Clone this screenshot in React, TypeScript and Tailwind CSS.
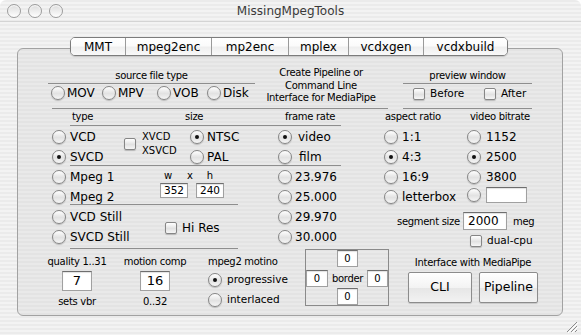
import React from 'react'

/* ─── Aqua controls ─────────────────────────────────────────────────────── */

function Radio({ on }: { on?: boolean }) {
  return (
    <span className="flex h-[14px] w-[14px] shrink-0 items-center justify-center rounded-full border border-[#868686] bg-[linear-gradient(to_bottom,#ffffff,#e2e2e2_55%,#f6f6f6)] shadow-[0_1px_1px_rgba(0,0,0,0.2)]">
      {on && <span className="h-[4px] w-[4px] rounded-full bg-[#111]" />}
    </span>
  )
}

function Check() {
  return (
    <span className="block h-[12px] w-[12px] shrink-0 rounded-[2px] border border-[#868686] bg-[linear-gradient(to_bottom,#ffffff,#e2e2e2_55%,#f6f6f6)] shadow-[0_1px_1px_rgba(0,0,0,0.2)]" />
  )
}

interface RadioRowProps {
  label: string
  on?: boolean
  gap?: string
  size?: string
}

function RadioRow({ label, on, gap = 'gap-[4px]', size = 'text-[12px]' }: RadioRowProps) {
  return (
    <div className={`flex h-[20px] items-center whitespace-nowrap ${gap}`}>
      <Radio on={on} />
      <span className={size}>{label}</span>
    </div>
  )
}

function Field({ value = '', className = '' }: { value?: string; className?: string }) {
  return (
    <div className={`flex items-center border border-[#a0a0a0] border-t-[#6e6e6e] bg-white shadow-[inset_0_1px_1px_rgba(0,0,0,0.12)] ${className}`}>
      {value}
    </div>
  )
}

/* ─── Window chrome ─────────────────────────────────────────────────────── */

function Light() {
  return (
    <span className="block h-[14px] w-[14px] rounded-full border border-[#9c9c9c] bg-[linear-gradient(to_bottom,#dcdcdc,#f4f4f4_70%,#ffffff)] shadow-[inset_0_1px_1px_rgba(255,255,255,0.9)]" />
  )
}

const TABS = [
  { name: 'MMT', w: 'w-[54px]' },
  { name: 'mpeg2enc', w: 'w-[86px]' },
  { name: 'mp2enc', w: 'w-[77px]' },
  { name: 'mplex', w: 'w-[60px]' },
  { name: 'vcdxgen', w: 'w-[75px]' },
  { name: 'vcdxbuild', w: 'w-[84px]' },
]

/* ─── App ───────────────────────────────────────────────────────────────── */

export default function App() {
  return (
    <div className="h-[335px] w-[581px] overflow-hidden rounded-t-[6px] bg-[image:repeating-linear-gradient(to_bottom,#ebebeb_0px,#ebebeb_2px,#f3f3f3_2px,#f3f3f3_4px)] font-['DejaVu_Sans',sans-serif] text-black">
      {/* Title bar */}
      <div className="relative flex h-[22px] items-center border-b border-[#d4d4d4]">
        <div className="ml-[7px] flex gap-[7px]">
          <Light />
          <Light />
          <Light />
        </div>
        <div className="absolute inset-x-0 top-0 flex h-[21px] items-center justify-center text-[12px] text-[#3a3a3a]">
          MissingMpegTools
        </div>
      </div>

      <div className="pt-[15px]">
        {/* Tabs */}
        <div className="relative z-10 ml-[70px] flex h-[19px] w-[438px] overflow-hidden rounded-[5px] border border-[#7c7c7c] shadow-[0_1px_1px_rgba(0,0,0,0.15)]">
          {TABS.map((t, i) => (
            <div
              key={t.name}
              className={`flex h-full items-center justify-center bg-[linear-gradient(to_bottom,#ffffff_0%,#fbfbfb_45%,#efefef_55%,#f9f9f9_100%)] text-[12px] ${t.w} ${i > 0 ? 'border-l border-[#9a9a9a]' : ''}`}
            >
              {t.name}
            </div>
          ))}
        </div>

        {/* Panel */}
        <div className="-mt-[8px] ml-[17px] h-[268px] w-[546px] rounded-[6px] border border-[#a2a2a2] bg-[image:repeating-linear-gradient(to_bottom,#e3e3e3_0px,#e3e3e3_2px,#e9e9e9_2px,#e9e9e9_4px)]">
          <div className="pt-[20px]">
            {/* Row A */}
            <div className="flex h-[37px]">
              <div className="ml-[30px] w-[207px]">
                <div className="h-[15px] border-b border-[#8e8e8e] text-center text-[10px] leading-[14px] tracking-[-0.3px]">
                  source file type
                </div>
                <div className="mt-[2px] flex h-[14px] items-center pl-[3px] text-[12px]">
                  <div className="flex w-[51px] items-center gap-[2px]"><Radio /><span>MOV</span></div>
                  <div className="flex w-[55px] items-center gap-[2px]"><Radio /><span>MPV</span></div>
                  <div className="flex w-[50px] items-center gap-[2px]"><Radio /><span>VOB</span></div>
                  <div className="flex items-center gap-[2px]"><Radio /><span>Disk</span></div>
                </div>
              </div>
              <div className="-mt-[2px] ml-[7px] w-[118px] text-center text-[10px] leading-[12.5px] tracking-[-0.3px] whitespace-nowrap">
                <div>Create Pipeline or</div>
                <div>Command Line</div>
                <div>Interface for MediaPipe</div>
              </div>
              <div className="ml-[23px] w-[129px]">
                <div className="h-[15px] border-b border-[#8e8e8e] text-center text-[10px] leading-[14px] tracking-[-0.3px]">
                  preview window
                </div>
                <div className="mt-[4px] flex h-[12px] items-center text-[10.5px]">
                  <div className="flex w-[81px] items-center gap-[5px] pl-[10px]"><Check /><span>Before</span></div>
                  <div className="flex items-center gap-[5px]"><Check /><span>After</span></div>
                </div>
              </div>
            </div>

            <div className="mt-[2px] flex h-px">
              <div className="ml-[34px] w-[336px] bg-[#8e8e8e]" />
              <div className="ml-[15px] w-[129px] bg-[#8e8e8e]" />
            </div>

            {/* Row B */}
            <div className="flex h-[140px]">
              <div className="ml-[34px] flex w-[293px] flex-col">
                <div className="ml-[18px] flex h-[17px] w-[271px] border-b border-[#8e8e8e] pl-[2px] text-[10px] leading-[16px] tracking-[-0.3px]">
                  <span className="w-[113px]">type</span>
                  <span className="w-[100px]">size</span>
                  <span>frame rate</span>
                </div>

                <div className="flex h-[39px] pt-[1px]">
                  <div className="w-[72px]">
                    <RadioRow label="VCD" />
                    <RadioRow label="SVCD" on />
                  </div>
                  <div className="flex w-[154px] items-start">
                    <div className="mt-[3px] flex w-[66px] items-center">
                      <Check />
                      <div className="ml-[6px] text-[10px] leading-[14px]">
                        <div>XVCD</div>
                        <div>XSVCD</div>
                      </div>
                    </div>
                    <div>
                      <RadioRow label="NTSC" on gap="gap-[3px]" />
                      <RadioRow label="PAL" gap="gap-[3px]" />
                    </div>
                  </div>
                  <div>
                    <RadioRow label="video" on gap="gap-[6px]" />
                    <RadioRow label="film" gap="gap-[7px]" />
                  </div>
                </div>
                <div className="ml-[18px] h-px w-[271px] shrink-0 bg-[#8e8e8e]" />

                <div className="flex h-[38px] pt-[1px]">
                  <div className="w-[72px]">
                    <RadioRow label="Mpeg 1" />
                    <RadioRow label="Mpeg 2" />
                  </div>
                  <div className="w-[154px] pl-[36px] pt-[3px]">
                    <div className="flex h-[12px] text-[10px] leading-[12px]">
                      <span className="w-[16px] text-center">w</span>
                      <span className="w-[28px] text-center">x</span>
                      <span className="w-[12px] text-center">h</span>
                    </div>
                    <div className="mt-[1px] flex gap-[8px] text-[10.5px]">
                      <Field value="352" className="h-[15px] w-[28px] pl-[3px]" />
                      <Field value="240" className="h-[15px] w-[28px] pl-[3px]" />
                    </div>
                  </div>
                  <div>
                    <RadioRow label="23.976" gap="gap-[3px]" />
                    <RadioRow label="25.000" gap="gap-[3px]" />
                  </div>
                </div>
                <div className="ml-[18px] h-px w-[168px] shrink-0 bg-[#8e8e8e]" />

                <div className="flex h-[43px] pt-[2px]">
                  <div className="w-[72px]">
                    <RadioRow label="VCD Still" />
                    <RadioRow label="SVCD Still" />
                  </div>
                  <div className="w-[154px] pl-[41px] pt-[14px]">
                    <div className="flex h-[14px] items-center gap-[5px] text-[12px]">
                      <Check />
                      <span>Hi Res</span>
                    </div>
                  </div>
                  <div>
                    <RadioRow label="29.970" gap="gap-[3px]" />
                    <RadioRow label="30.000" gap="gap-[3px]" />
                  </div>
                </div>
                <div className="ml-[18px] h-px w-[168px] shrink-0 bg-[#8e8e8e]" />
              </div>

              <div className="ml-[38px] flex w-[152px] flex-col">
                <div className="flex">
                  <div className="w-[84px] pl-[1px]">
                    <div className="h-[16px] pl-[1px] text-[10px] leading-[16px] tracking-[-0.3px]">aspect ratio</div>
                    <div className="pt-[2px]">
                      <RadioRow label="1:1" />
                      <RadioRow label="4:3" on />
                      <RadioRow label="16:9" />
                      <RadioRow label="letterbox" />
                    </div>
                  </div>
                  <div className="w-[68px]">
                    <div className="h-[16px] pl-[3px] text-[10px] leading-[16px] tracking-[-0.3px] whitespace-nowrap">video bitrate</div>
                    <div className="pt-[2px]">
                      <RadioRow label="1152" gap="gap-[5px]" />
                      <RadioRow label="2500" on gap="gap-[5px]" />
                      <RadioRow label="3800" gap="gap-[5px]" />
                      <div className="-mt-[2px] flex h-[20px] items-center gap-[5px]">
                        <Radio />
                        <Field className="h-[16px] w-[41px]" />
                      </div>
                    </div>
                  </div>
                </div>
                <div className="mt-[5px] flex h-[18px] items-center pl-[14px] text-[10px] tracking-[-0.3px] whitespace-nowrap">
                  <span className="w-[66px]">segment size</span>
                  <Field value="2000" className="h-[18px] w-[44px] pl-[4px] text-[12px] tracking-normal" />
                  <span className="ml-[6px]">meg</span>
                </div>
                <div className="mt-[5px] flex h-[12px] items-center gap-[5px] pl-[87px] text-[10.5px]">
                  <Check />
                  <span>dual-cpu</span>
                </div>
              </div>
            </div>

            {/* Row C */}
            <div className="flex h-[66px]">
              <div className="ml-[28px] flex w-[62px] flex-col items-center pt-[7px] text-[10px] leading-[12px] tracking-[-0.3px] whitespace-nowrap">
                <span>quality 1..31</span>
                <Field value="7" className="mt-[3px] h-[20px] w-[30px] justify-center text-[13px] tracking-normal" />
                <span className="mt-[5px]">sets vbr</span>
              </div>
              <div className="ml-[14px] flex w-[66px] flex-col items-center pt-[7px] text-[10px] leading-[12px] tracking-[-0.3px] whitespace-nowrap">
                <span>motion comp</span>
                <Field value="16" className="mt-[3px] h-[20px] w-[30px] justify-center text-[13px] tracking-normal" />
                <span className="mt-[5px]">0..32</span>
              </div>
              <div className="ml-[20px] w-[97px] pt-[7px]">
                <div className="text-[10px] leading-[12px] tracking-[-0.3px] whitespace-nowrap">mpeg2 motino</div>
                <div className="mt-[2px]">
                  <RadioRow label="progressive" on gap="gap-[5px]" size="text-[10.5px]" />
                  <RadioRow label="interlaced" gap="gap-[5px]" size="text-[10.5px]" />
                </div>
              </div>
              <div className="h-[57px] w-[84px] border border-[#8a8a8a] text-[10px]">
                <Field value="0" className="ml-[31px] h-[17px] w-[21px] justify-center" />
                <div className="mt-[3px] flex h-[17px] items-center">
                  <Field value="0" className="h-[17px] w-[22px] justify-center" />
                  <span className="w-[39px] text-center tracking-[-0.3px]">border</span>
                  <Field value="0" className="h-[17px] w-[21px] justify-center" />
                </div>
                <Field value="0" className="mt-[1px] ml-[31px] h-[17px] w-[21px] justify-center" />
              </div>
              <div className="ml-[19px] flex w-[130px] flex-col items-center pt-[8px]">
                <span className="text-[10px] leading-[12px] tracking-[-0.3px] whitespace-nowrap">Interface with MediaPipe</span>
                <div className="mt-[3px] flex gap-[7px] text-[12.5px]">
                  <button className="flex h-[31px] w-[64px] items-center justify-center rounded-[2px] border border-[#8c8c8c] bg-[linear-gradient(to_bottom,#ffffff,#f3f3f3_50%,#e6e6e6_52%,#f2f2f2)] shadow-[0_1px_1px_rgba(0,0,0,0.15)]">
                    CLI
                  </button>
                  <button className="flex h-[31px] w-[59px] items-center justify-center rounded-[2px] border border-[#8c8c8c] bg-[linear-gradient(to_bottom,#ffffff,#f3f3f3_50%,#e6e6e6_52%,#f2f2f2)] shadow-[0_1px_1px_rgba(0,0,0,0.15)]">
                    Pipeline
                  </button>
                </div>
              </div>
            </div>
          </div>
        </div>

        {/* Resize grip */}
        <div className="mt-[5px] flex justify-end pr-[3px]">
          <svg width="12" height="12" viewBox="0 0 12 12">
            <path d="M11 1L1 11M11 5L5 11M11 9L9 11" stroke="#8a8a8a" strokeWidth="1" />
            <path d="M12 2L2 12M12 6L6 12" stroke="#ffffff" strokeWidth="1" />
          </svg>
        </div>
      </div>
    </div>
  )
}
